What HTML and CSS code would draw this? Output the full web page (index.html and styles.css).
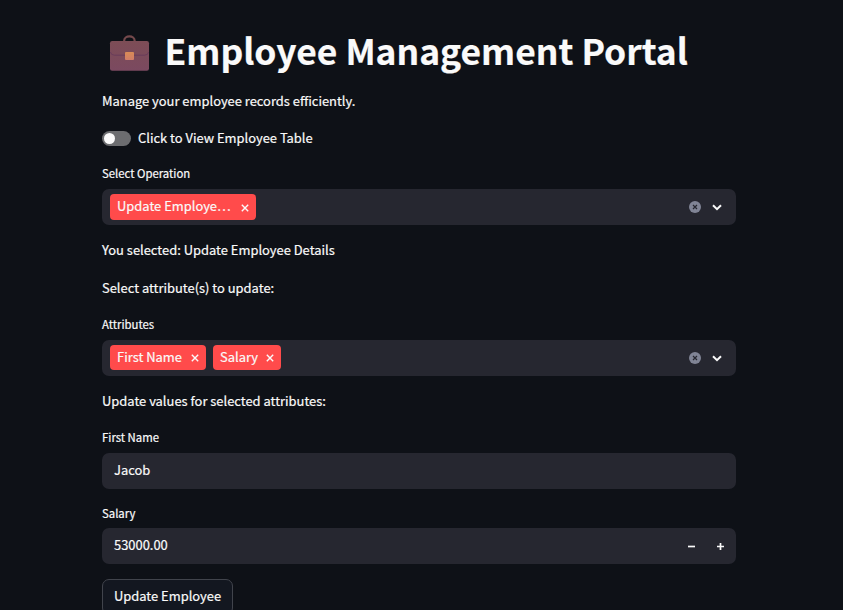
FILE: index.html
```html
<!DOCTYPE html>
<html lang="en">
<head>
<meta charset="utf-8">
<title>Employee Management Portal</title>
<link rel="stylesheet" href="styles.css">
</head>
<body>
<main class="page">
  <h1 class="title">
    <svg class="briefcase" width="41" height="36" viewBox="0 0 41 36" aria-hidden="true">
      <defs>
        <linearGradient id="leather" x1="0" y1="0" x2="0" y2="1"><stop offset="0" stop-color="#7d4d56"/><stop offset="1" stop-color="#7b4960"/></linearGradient>
        <linearGradient id="clasp" x1="0" y1="0" x2="0" y2="1"><stop offset="0" stop-color="#d98b55"/><stop offset="1" stop-color="#d17d68"/></linearGradient>
      </defs>
      <path d="M15.200 7V5.600a5.200 4.200 0 0 1 10.400 0V7" fill="none" stroke="#74494c" stroke-width="2.200"/>
      <rect x="1" y="6" width="39" height="29.700" rx="2.200" fill="url(#leather)"/>
      <path d="M1.500 17q.3 3.200 4 3.200h30q3.700 0 4-3.200" fill="none" stroke="#693c5a"/>
      <rect x="16" y="17" width="9" height="8" rx="1" fill="url(#clasp)"/>
    </svg>
    <span>Employee Management Portal</span>
  </h1>
  <p class="text intro">Manage your employee records efficiently.</p>
  <div class="toggle-row"><span class="toggle"><span class="knob"></span></span><span class="text">Click to View Employee Table</span></div>

  <section class="field">
    <div class="label">Select Operation</div>
    <div class="control select">
      <span class="tag tag-wide"><span>Update Employe…</span><svg width="8" height="8" viewBox="0 0 8 8"><path d="M.8.8l6.400 6.400M7.200.8L.8 7.200"/></svg></span>
      <span class="actions">
        <svg width="12" height="12" viewBox="0 0 12 12"><circle cx="6" cy="6" r="6" fill="#808495"/><path d="M4 4l4 4M8 4L4 8" stroke="#262730" stroke-width="1.200"/></svg>
        <svg width="10" height="7" viewBox="0 0 10 7"><path d="M1 1.200l4 4 4-4" fill="none" stroke="#fafafa" stroke-width="2"/></svg>
      </span>
    </div>
  </section>
  <p class="text note">You selected: Update Employee Details</p>
  <p class="text note">Select attribute(s) to update:</p>

  <section class="field">
    <div class="label">Attributes</div>
    <div class="control select">
      <span class="tag tag-name"><span>First Name</span><svg width="8" height="8" viewBox="0 0 8 8"><path d="M.8.8l6.400 6.400M7.200.8L.8 7.200"/></svg></span>
      <span class="tag tag-salary"><span>Salary</span><svg width="8" height="8" viewBox="0 0 8 8"><path d="M.8.8l6.400 6.400M7.200.8L.8 7.200"/></svg></span>
      <span class="actions">
        <svg width="12" height="12" viewBox="0 0 12 12"><circle cx="6" cy="6" r="6" fill="#808495"/><path d="M4 4l4 4M8 4L4 8" stroke="#262730" stroke-width="1.200"/></svg>
        <svg width="10" height="7" viewBox="0 0 10 7"><path d="M1 1.200l4 4 4-4" fill="none" stroke="#fafafa" stroke-width="2"/></svg>
      </span>
    </div>
  </section>
  <p class="text note">Update values for selected attributes:</p>

  <section class="field">
    <div class="label">First Name</div>
    <div class="control input name">Jacob</div>
  </section>
  <section class="field salary">
    <div class="label">Salary</div>
    <div class="control input number"><span>53000.00</span>
      <span class="steps">
        <svg width="7" height="7" viewBox="0 0 7 7"><path d="M0 3.500h7" stroke="#fafafa" stroke-width="1.700"/></svg>
        <svg width="7" height="7" viewBox="0 0 7 7"><path d="M0 3.500h7M3.500 0v7" stroke="#fafafa" stroke-width="1.700"/></svg>
      </span>
    </div>
  </section>
  <button class="button" type="button">Update Employee</button>
</main>
</body>
</html>
```
FILE: styles.css
```css
* { box-sizing: border-box; }
html, body { height: 100%; }
body {
  margin: 0;
  overflow: hidden;
  background: #0e1117;
  color: #fafafa;
  font: 12.93px/23px "Noto Sans CJK JP", "Noto Sans", sans-serif;
  -webkit-text-stroke: 0.2px;
}
svg { display: block; flex: none; }
.page {
  width: 634px;
  margin-left: 102px;
  padding-top: 27px;
  display: flex;
  flex-direction: column;
  gap: 15px;
}
.title {
  display: flex;
  align-items: center;
  height: 48px;
  margin: 0;
  padding-left: 7px;
  font-size: 35.4px;
  line-height: 48px;
  font-weight: 700;
  white-space: nowrap;
  -webkit-text-stroke: 0.2px;
}
.title span { padding-bottom: 2px; }
.briefcase { margin-right: 14.5px; margin-top: 4px; }
.text { height: 23px; margin: 0; line-height: 21px; white-space: nowrap; }
.note { line-height: 19px; }
.intro { margin-bottom: -1px; }
.toggle-row { display: flex; align-items: center; gap: 7px; height: 23px; }
.toggle { width: 29px; height: 15px; padding: 2px; border-radius: 8px; background: #6c6d70; }
.knob { display: block; width: 11px; height: 11px; border-radius: 50%; background: #fafafa; }
.field { margin-top: -1px; }
.label { height: 25px; font-size: 11.35px; line-height: 18px; }
.control { display: flex; align-items: center; height: 36px; border-radius: 7px; background: #262730; }
.select { gap: 7px; padding: 0 14px 0 8px; }
.tag {
  display: flex;
  align-items: center;
  justify-content: space-between;
  height: 26px;
  padding: 0 7px;
  border-radius: 4px;
  background: #ff4b4b;
  line-height: 22px;
  white-space: nowrap;
}
.tag > span { height: 24px; }
.tag svg { margin-top: 1px; }
.tag path { fill: none; stroke: #fafafa; stroke-width: 1.4; }
.tag-wide { width: 146px; }
.tag-name, .tag-salary { height: 25px; margin-bottom: 1px; }
.tag-name { width: 96px; }
.tag-salary { width: 68px; }
.actions { display: flex; align-items: center; gap: 11px; margin-left: auto; }
.input { padding: 0 12px; }
.name { padding-bottom: 3px; }
.salary .label { line-height: 20px; }
.number { justify-content: space-between; }
.number > span:first-child { padding-bottom: 4px; }
.steps { display: flex; gap: 22px; }
.button {
  width: 131px;
  height: 36px;
  padding: 0 0 4px;
  border: 1px solid #41444c;
  border-radius: 7px;
  background: #131720;
  color: inherit;
  font: inherit;
}
```
